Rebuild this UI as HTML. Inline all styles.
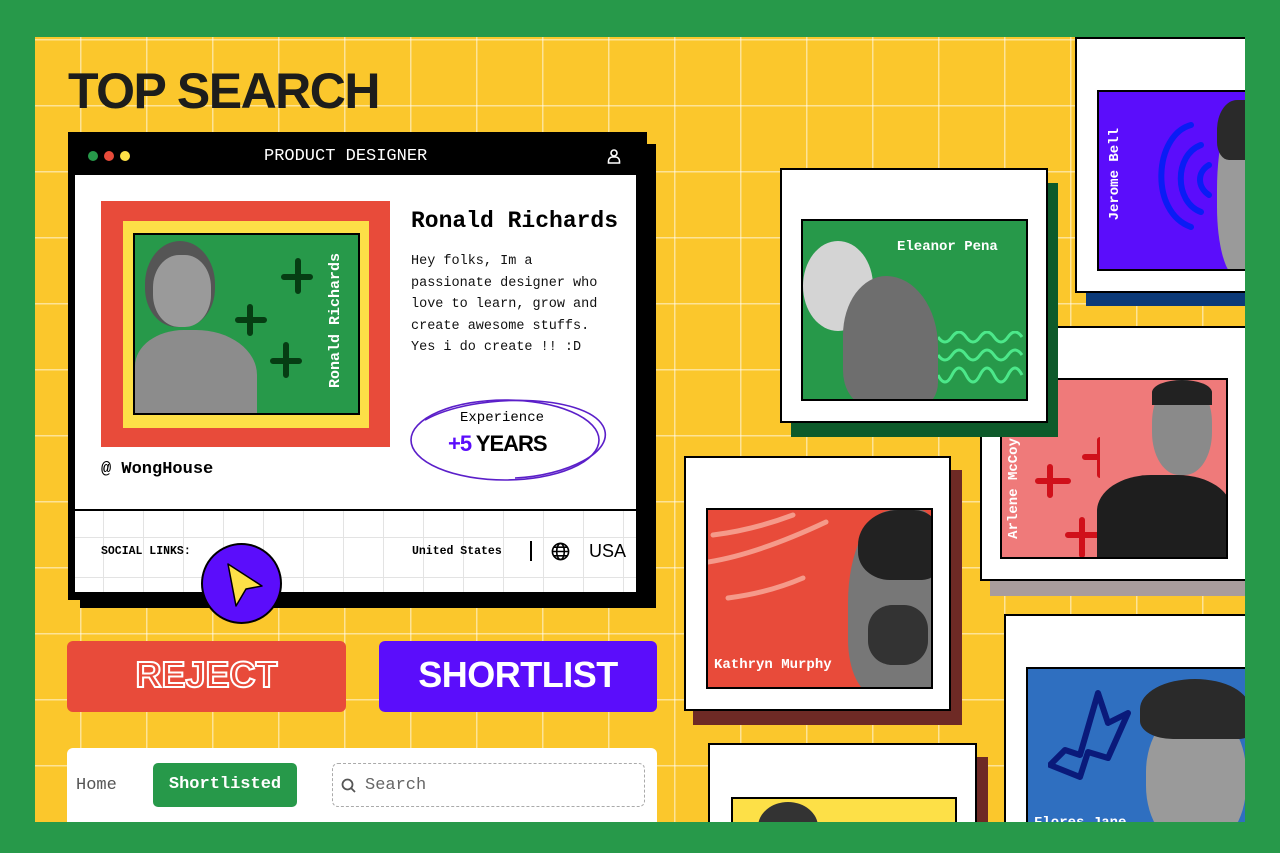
<!DOCTYPE html>
<html><head><meta charset="utf-8"><style>
*{margin:0;padding:0;box-sizing:border-box}
body{width:1280px;height:853px;background:#27994a;position:relative;overflow:hidden;font-family:"Liberation Mono",monospace}
.a{position:absolute}
#panel{left:35px;top:37px;width:1210px;height:785px;background-color:#fbc72c;
background-image:linear-gradient(to right,rgba(255,255,255,.5) 1.5px,transparent 1.5px),linear-gradient(to bottom,rgba(255,255,255,.5) 1.5px,transparent 1.5px);
background-size:66px 66px;background-position:45px 2px;overflow:hidden}
.ttl{font-family:"Liberation Sans",sans-serif;font-weight:900;font-size:50px;letter-spacing:-1.5px;color:#1d1d1b}
.card{background:#fff;border:2px solid #000}
.ph{border:2px solid #000;overflow:hidden}
.nm{color:#fff;font-weight:bold;font-size:14px}
.vert{writing-mode:vertical-rl;transform:rotate(180deg)}
.head{background:#7a7a7a;border-radius:50% 50% 45% 45%}
</style></head><body>
<div id="panel" class="a">
</div>
<div class="a ttl" style="left:68px;top:62px">TOP SEARCH</div>

<!-- main card -->
<div class="a" style="left:80px;top:144px;width:576px;height:464px;background:#000"></div>
<div class="a" style="left:68px;top:132px;width:579px;height:468px;background:#000"></div>
<div class="a" style="left:88px;top:151px;width:10px;height:10px;border-radius:50%;background:#27994a"></div>
<div class="a" style="left:104px;top:151px;width:10px;height:10px;border-radius:50%;background:#e84b3a"></div>
<div class="a" style="left:120px;top:151px;width:10px;height:10px;border-radius:50%;background:#fde047"></div>
<div class="a" style="left:264px;top:147px;color:#fff;font-size:17px">PRODUCT DESIGNER</div>
<svg class="a" style="left:606px;top:148px" width="16" height="16" viewBox="0 0 16 16" fill="none" stroke="#fff" stroke-width="1.6"><circle cx="8" cy="5" r="3"/><path d="M2.5 15v-2a4 4 0 0 1 4-4h3a4 4 0 0 1 4 4v2z"/></svg>
<div class="a" style="left:75px;top:175px;width:561px;height:334px;background:#fff"></div>
<div class="a" style="left:75px;top:511px;width:561px;height:81px;background-color:#fff;background-image:linear-gradient(to right,#e3e3e3 1px,transparent 1px),linear-gradient(to bottom,#e3e3e3 1px,transparent 1px);background-size:40px 40px;background-position:28px 26px"></div>

<div class="a" style="left:101px;top:201px;width:289px;height:246px;background:#e84b3a"></div>
<div class="a" style="left:123px;top:221px;width:246px;height:207px;background:#fde047"></div>
<div class="a ph" style="left:133px;top:233px;width:227px;height:182px;background:#27994a">
  <div class="a head" style="left:10px;top:6px;width:70px;height:86px;background:#555"></div>
  <div class="a" style="left:18px;top:20px;width:58px;height:72px;background:#9a9a9a;border-radius:45%"></div>
  <div class="a" style="left:0;top:95px;width:122px;height:90px;background:#8c8c8c;border-radius:40% 50% 0 0"></div>
  <svg class="a" style="left:95px;top:22px" width="90" height="130" viewBox="0 0 90 130" stroke="#063d13" stroke-width="6" stroke-linecap="round"><path d="M68 4v30M54 20h26M20 50v26M8 63h26M56 88v30M43 104h26"/></svg>
  <div class="a vert nm" style="left:192px;top:18px;font-size:15px">Ronald Richards</div>
</div>

<div class="a" style="left:411px;top:208px;font-size:23px;font-weight:bold">Ronald Richards</div>
<div class="a" style="left:411px;top:251px;font-size:13.5px;line-height:21.5px;color:#111">Hey folks, Im a<br>passionate designer who<br>love to learn, grow and<br>create awesome stuffs.<br>Yes i do create !! :D</div>
<svg class="a" style="left:405px;top:392px" width="210" height="95" viewBox="0 0 210 95" fill="none" stroke="#5b1fc9" stroke-width="1.6"><ellipse cx="100" cy="48" rx="94" ry="40"/><path d="M20 28C70 0 180 2 198 34C212 60 160 84 110 86" /></svg>
<div class="a" style="left:460px;top:410px;font-size:14px">Experience</div>
<div class="a" style="left:448px;top:431px;font-family:'Liberation Sans',sans-serif;font-weight:900;font-size:22px;letter-spacing:-1px"><span style="color:#5b0dfb">+5</span> YEARS</div>
<div class="a" style="left:101px;top:460px;font-size:17px;font-weight:bold">@ WongHouse</div>
<div class="a" style="left:75px;top:509px;width:561px;height:2px;background:#000"></div>
<div class="a" style="left:101px;top:545px;font-size:11.5px;font-weight:bold">SOCIAL LINKS:</div>
<div class="a" style="left:412px;top:545px;font-size:11.5px;font-weight:bold">United States</div>
<div class="a" style="left:530px;top:541px;width:2px;height:20px;background:#000"></div>
<svg class="a" style="left:551px;top:542px" width="19" height="19" viewBox="0 0 20 20" fill="none" stroke="#000" stroke-width="1.7"><circle cx="10" cy="10" r="8.5"/><ellipse cx="10" cy="10" rx="4" ry="8.5"/><path d="M1.5 10h17M3 5.5h14M3 14.5h14"/></svg>
<div class="a" style="left:589px;top:541px;font-family:'Liberation Sans',sans-serif;font-size:18px">USA</div>
<div class="a" style="left:201px;top:543px;width:81px;height:81px;border-radius:50%;background:#5b0dfb;border:2px solid #000"></div>
<svg class="a" style="left:222px;top:560px" width="46" height="50" viewBox="0 0 46 50"><path d="M6 4L40 26L24 29L14 46Z" fill="#fde047" stroke="#000" stroke-width="1.5" stroke-linejoin="round"/></svg>

<!-- buttons -->
<div class="a" style="left:67px;top:641px;width:279px;height:71px;background:#e84b3a;border-radius:6px"></div>
<div class="a" style="left:67px;top:654px;width:279px;text-align:center;font-family:'Liberation Sans',sans-serif;font-weight:900;font-size:36px;color:#e84b3a;-webkit-text-stroke:2px #fff;letter-spacing:0px">REJECT</div>
<div class="a" style="left:379px;top:641px;width:278px;height:71px;background:#5b0dfb;border-radius:6px"></div>
<div class="a" style="left:379px;top:654px;width:278px;text-align:center;font-family:'Liberation Sans',sans-serif;font-weight:900;font-size:36px;color:#fff;letter-spacing:-0.5px">SHORTLIST</div>

<!-- nav -->
<div class="a" style="left:67px;top:748px;width:590px;height:80px;background:#fff;border-radius:6px"></div>
<div class="a" style="left:76px;top:776px;font-size:17px;color:#555">Home</div>
<div class="a" style="left:153px;top:763px;width:144px;height:44px;background:#27994a;border-radius:5px;color:#fff;font-weight:bold;font-size:17px;text-align:center;line-height:44px">Shortlisted</div>
<div class="a" style="left:332px;top:763px;width:313px;height:44px;border:1px dashed #aaa;border-radius:6px"></div>
<svg class="a" style="left:341px;top:778px" width="15" height="15" viewBox="0 0 15 15" fill="none" stroke="#555" stroke-width="1.8"><circle cx="6.5" cy="6.5" r="5"/><path d="M10 10l4 4"/></svg>
<div class="a" style="left:365px;top:776px;font-size:17px;color:#666">Search</div>

<!-- right cards -->
<!-- Jerome -->
<div class="a" style="left:1086px;top:60px;width:170px;height:246px;background:#0c3a78"></div>
<div class="a card" style="left:1075px;top:37px;width:185px;height:256px"></div>
<div class="a ph" style="left:1097px;top:90px;width:160px;height:181px;background:#5b0dfb">
  <svg class="a" style="left:50px;top:25px" width="80" height="120" viewBox="0 0 80 120" fill="none" stroke="#0a1cf5" stroke-width="6" stroke-linecap="round"><path d="M42 8C5 18 0 95 42 110M52 28C25 38 25 85 52 95M60 48C48 55 48 70 60 78"/></svg>
  <div class="a" style="left:118px;top:10px;width:50px;height:175px;background:#9a9a9a;border-radius:50% 0 0 40%"></div>
  <div class="a" style="left:118px;top:8px;width:40px;height:60px;background:#2a2a2a;border-radius:50% 0 0 30%"></div>
  <div class="a vert nm" style="left:8px;top:36px;font-size:14px">Jerome Bell</div>
</div>
<!-- Arlene -->
<div class="a" style="left:990px;top:340px;width:270px;height:256px;background:#a89c9c"></div>
<div class="a card" style="left:980px;top:326px;width:280px;height:255px"></div>
<div class="a ph" style="left:1000px;top:378px;width:228px;height:181px;background:#ef7a7a">
  <svg class="a" style="left:28px;top:55px" width="70" height="125" viewBox="0 0 70 125" stroke="#d0101a" stroke-width="6" stroke-linecap="round"><path d="M20 32v28M8 46h30M70 5v35M55 22h30M52 85v35M38 100h30"/></svg>
  <div class="a" style="left:95px;top:95px;width:135px;height:90px;background:#1e1e1e;border-radius:40% 40% 0 0"></div>
  <div class="a" style="left:150px;top:0;width:60px;height:95px;background:#8a8a8a;border-radius:45%"></div>
  <div class="a" style="left:150px;top:0;width:60px;height:25px;background:#222;border-radius:50% 50% 0 0"></div>
  <div class="a vert nm" style="left:4px;top:58px;font-size:14px">Arlene McCoy</div>
</div>
<!-- Eleanor -->
<div class="a" style="left:791px;top:183px;width:267px;height:254px;background:#0d5a2a"></div>
<div class="a card" style="left:780px;top:168px;width:268px;height:255px"></div>
<div class="a ph" style="left:801px;top:219px;width:227px;height:182px;background:#27994a">
  <div class="a" style="left:0;top:20px;width:70px;height:90px;background:#d4d4d4;border-radius:50%"></div>
  <div class="a" style="left:40px;top:55px;width:95px;height:130px;background:#6e6e6e;border-radius:50% 60% 20% 30%"></div>
  <svg class="a" style="left:135px;top:110px" width="92" height="65" viewBox="0 0 92 65" fill="none" stroke="#4ce88a" stroke-width="3"><path d="M0 6q7 10 14 0t14 0 14 0 14 0 14 0 14 0M0 24q7 10 14 0t14 0 14 0 14 0 14 0 14 0M0 44q7 14 14 0t14 0 14 0 14 0 14 0 14 0"/></svg>
  <div class="a nm" style="left:94px;top:18px">Eleanor Pena</div>
</div>
<!-- Kathryn -->
<div class="a" style="left:693px;top:470px;width:269px;height:255px;background:#6e2a25"></div>
<div class="a card" style="left:684px;top:456px;width:267px;height:255px"></div>
<div class="a ph" style="left:706px;top:508px;width:227px;height:181px;background:#e84b3a">
  <svg class="a" style="left:0;top:0" width="130" height="100" viewBox="0 0 130 100" fill="none" stroke="#f59a8a" stroke-width="5" stroke-linecap="round"><path d="M5 25q40-5 80-20M0 52q50-8 118-40M20 88q40-5 75-20"/></svg>
  <div class="a" style="left:140px;top:0;width:90px;height:185px;background:#777;border-radius:50% 20% 0 30%"></div>
  <div class="a" style="left:150px;top:0;width:80px;height:70px;background:#222;border-radius:50% 30% 20% 40%"></div>
  <div class="a" style="left:160px;top:95px;width:60px;height:60px;background:#333;border-radius:40%"></div>
  <div class="a nm" style="left:6px;top:147px">Kathryn Murphy</div>
</div>
<!-- bottom -->
<div class="a" style="left:718px;top:757px;width:270px;height:80px;background:#6e2a25"></div>
<div class="a card" style="left:708px;top:743px;width:269px;height:90px"></div>
<div class="a ph" style="left:731px;top:797px;width:226px;height:40px;background:#fde047">
  <div class="a" style="left:25px;top:3px;width:60px;height:50px;background:#333;border-radius:50%"></div>
</div>
<!-- Flores -->
<div class="a card" style="left:1004px;top:614px;width:256px;height:230px"></div>
<div class="a ph" style="left:1026px;top:667px;width:230px;height:170px;background:#2f6fc0">
  <svg class="a" style="left:20px;top:20px" width="90" height="100" viewBox="0 0 90 100" fill="none" stroke="#0a1a7a" stroke-width="6" stroke-linejoin="round"><path d="M50 4l10 30 20-10 -20 45 -20-6 -8 25 -30-12 15-15 15 5z"/></svg>
  <div class="a" style="left:118px;top:40px;width:100px;height:140px;background:#9a9a9a;border-radius:45%"></div>
  <div class="a" style="left:112px;top:10px;width:110px;height:60px;background:#2a2a2a;border-radius:50% 50% 10% 30%"></div>
  <div class="a nm" style="left:6px;top:146px">Flores Jane</div>
</div>
<!-- outer green mask -->
<div class="a" style="left:1245px;top:0;width:35px;height:853px;background:#27994a"></div>
<div class="a" style="left:0;top:822px;width:1280px;height:31px;background:#27994a"></div>
<div class="a" style="left:0;top:0;width:1280px;height:37px;background:#27994a"></div>
</body></html>
